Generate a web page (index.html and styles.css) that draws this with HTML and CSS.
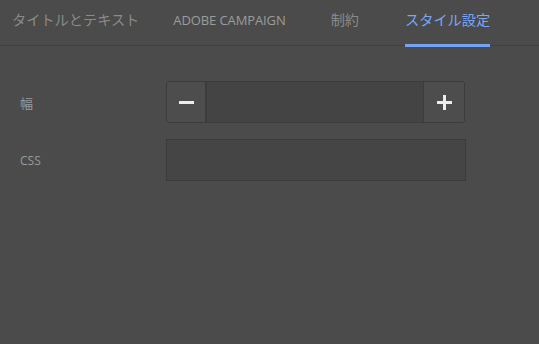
FILE: index.html
```html
<!DOCTYPE html>
<html lang="ja">
<head>
<meta charset="utf-8">
<link rel="stylesheet" href="styles.css">
</head>
<body>
<div class="panel">
  <nav class="tabs">
    <div class="tab tab-title">タイトルとテキスト</div>
    <div class="tab tab-adobe">ADOBE CAMPAIGN</div>
    <div class="tab tab-limit">制約</div>
    <div class="tab tab-style active">スタイル設定</div>
  </nav>
  <div class="form">
    <div class="row">
      <label class="label label-cjk">幅</label>
      <div class="stepper">
        <button class="step-btn minus" aria-label="減らす">
          <svg width="15" height="15" viewBox="0 0 15 15"><rect x="0" y="6" width="15" height="3" fill="#ececec"/></svg>
        </button>
        <input class="step-input" type="text">
        <button class="step-btn plus" aria-label="増やす">
          <svg width="15" height="15" viewBox="0 0 15 15"><rect x="0" y="6" width="15" height="3" fill="#ececec"/><rect x="6" y="0" width="3" height="15" fill="#ececec"/></svg>
        </button>
      </div>
    </div>
    <div class="row">
      <label class="label">CSS</label>
      <input class="text-input" type="text">
    </div>
  </div>
</div>
</body>
</html>
```
FILE: styles.css
```css
html, body {
  margin: 0;
  padding: 0;
  background: #4b4b4b;
  height: 100%;
}
body {
  font-family: "Open Sans", "Noto Sans CJK JP", sans-serif;
  color: #8e8e8e;
}
.panel {
  width: 539px;
  height: 344px;
}
.tabs {
  display: flex;
  height: 45px;
  border-bottom: 1px solid #404040;
  padding-left: 12px;
  box-sizing: content-box;
}
.tab {
  position: relative;
  font-family: "Noto Sans CJK JP", sans-serif;
  font-size: 14.2px;
  line-height: 20px;
  padding-top: 9px;
  color: #8a8a8a;
  white-space: nowrap;
}
.tab-adobe {
  font-family: "Open Sans", sans-serif;
  font-size: 13px;
  padding-top: 10px;
  margin-left: 34px;
  letter-spacing: -0.1px;
  color: #9c9c9c;
}
.tab-limit { margin-left: 45px; }
.tab-style { margin-left: 46px; }
.tab.active { color: #78a7f5; }
.tab.active::after {
  content: "";
  position: absolute;
  left: 0;
  right: 0;
  bottom: -2px;
  height: 3px;
  background: #72a3f7;
}
.form {
  padding: 35px 0 0 20px;
  display: flex;
  flex-direction: column;
  gap: 16px;
}
.row {
  display: flex;
  align-items: center;
  height: 42px;
}
.label {
  width: 146px;
  font-family: "Open Sans", "Noto Sans CJK JP", sans-serif;
  font-size: 12px;
  color: #9a9a9a;
}
.label-cjk {
  font-family: "Noto Sans CJK JP", sans-serif;
  font-size: 13px;
}
.stepper {
  display: flex;
  width: 299px;
  height: 42px;
  box-sizing: border-box;
  border: 1px solid #3c3c3c;
  border-radius: 3px;
  overflow: hidden;
  background: #444;
}
.step-btn {
  width: 40px;
  border: 0;
  margin: 0;
  padding: 0;
  background: #4d4d4d;
  display: flex;
  align-items: center;
  justify-content: center;
}
.minus { border-right: 2px solid #3c3c3c; }
.plus { border-left: 1px solid #3c3c3c; width: 41px; }
.step-input {
  flex: 1;
  min-width: 0;
  border: 0;
  margin: 0;
  padding: 0;
  background: #444;
}
.text-input {
  width: 300px;
  height: 42px;
  box-sizing: border-box;
  margin: 0;
  border: 1px solid #3c3c3c;
  background: #454545;
  padding: 0;
}
```
